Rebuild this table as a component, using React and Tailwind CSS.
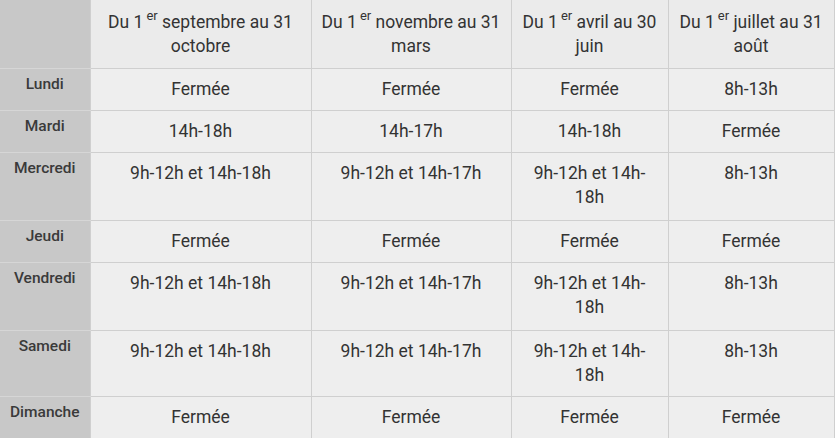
const periods = [
  ['septembre au 31', 'octobre'],
  ['novembre au 31', 'mars'],
  ['avril au 30', 'juin'],
  ['juillet au 31', 'août'],
];

const rows = [
  { day: 'Lundi', h: 'h-[42px]', cells: ['Fermée', 'Fermée', 'Fermée', '8h-13h'] },
  { day: 'Mardi', h: 'h-[42px]', cells: ['14h-18h', '14h-17h', '14h-18h', 'Fermée'] },
  { day: 'Mercredi', h: 'h-[68px]', cells: ['9h-12h et 14h-18h', '9h-12h et 14h-17h', '9h-12h et 14h-18h', '8h-13h'] },
  { day: 'Jeudi', h: 'h-[42px]', cells: ['Fermée', 'Fermée', 'Fermée', 'Fermée'] },
  { day: 'Vendredi', h: 'h-[68px]', cells: ['9h-12h et 14h-18h', '9h-12h et 14h-17h', '9h-12h et 14h-18h', '8h-13h'] },
  { day: 'Samedi', h: 'h-[66px]', cells: ['9h-12h et 14h-18h', '9h-12h et 14h-17h', '9h-12h et 14h-18h', '8h-13h'] },
  { day: 'Dimanche', h: 'h-[42px]', cells: ['Fermée', 'Fermée', 'Fermée', 'Fermée'] },
];

export default function App() {
  return (
    <div className="w-[836px] h-[438px] bg-white overflow-hidden font-['Roboto',sans-serif] text-[#333]">
      <table className="table-fixed border-collapse w-[834px]">
        <colgroup>
          <col className="w-[90px]" />
          <col className="w-[221px]" />
          <col className="w-[200px]" />
          <col className="w-[157px]" />
          <col className="w-[166px]" />
        </colgroup>
        <thead>
          <tr className="h-[68px]">
            <th className="bg-[#c8c8c8] border-b border-[#d6d6d6]"></th>
            {periods.map((p, i) => (
              <th
                key={i}
                className="bg-[#ebebeb] border border-t-0 border-[#cfcfcf] align-top px-[8px] pt-[10px] text-[17.5px] leading-[24px] font-normal text-center"
              >
                Du 1<sup className="text-[13px] relative top-[-8px] ml-[3px]">er</sup> {p[0]} {p[1]}
              </th>
            ))}
          </tr>
        </thead>
        <tbody>
          {rows.map((r) => (
            <tr key={r.day} className={r.h}>
              <th className="bg-[#c8c8c8] border-b border-[#d6d6d6] align-top pt-[5px] px-0 text-[15.5px] leading-[20px] font-medium text-center text-[#3a3a3a]">
                {r.day}
              </th>
              {r.cells.map((c, i) => (
                <td
                  key={i}
                  className="bg-[#eeeeee] border border-[#cfcfcf] align-top px-[8px] pt-[8px] text-[17.5px] leading-[24px] text-center"
                >
                  {c}
                </td>
              ))}
            </tr>
          ))}
        </tbody>
      </table>
    </div>
  );
}
